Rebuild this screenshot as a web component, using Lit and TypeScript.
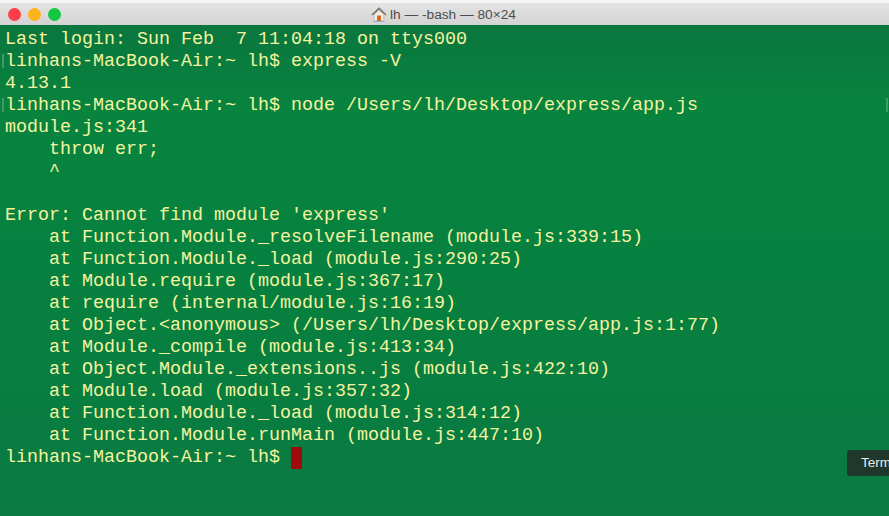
import { LitElement, html, css } from "lit";
import { customElement } from "lit/decorators.js";

const LINES = [
  "Last login: Sun Feb  7 11:04:18 on ttys000",
  "linhans-MacBook-Air:~ lh$ express -V",
  "4.13.1",
  "linhans-MacBook-Air:~ lh$ node /Users/lh/Desktop/express/app.js",
  "module.js:341",
  "    throw err;",
  "    ^",
  "",
  "Error: Cannot find module 'express'",
  "    at Function.Module._resolveFilename (module.js:339:15)",
  "    at Function.Module._load (module.js:290:25)",
  "    at Module.require (module.js:367:17)",
  "    at require (internal/module.js:16:19)",
  "    at Object.<anonymous> (/Users/lh/Desktop/express/app.js:1:77)",
  "    at Module._compile (module.js:413:34)",
  "    at Object.Module._extensions..js (module.js:422:10)",
  "    at Module.load (module.js:357:32)",
  "    at Function.Module._load (module.js:314:12)",
  "    at Function.Module.runMain (module.js:447:10)",
];

@customElement("app-root")
export class AppRoot extends LitElement {
  static styles = css`
    :host {
      display: block; width: 889px; height: 516px; overflow: hidden; position: relative;
      background: linear-gradient(#0a763e 25px, #08843f 110px, #07803f 300px, #0a7a42 516px);
    }
    .bar {
      height: 22px; border-top: 3px solid #f6f6f6; position: relative;
      background: linear-gradient(#e4e4e4, #d3d3d3);
      display: flex; align-items: center; justify-content: center;
      font: 13.7px "Liberation Sans", Arial, sans-serif; color: #4d4d4d;
    }
    .lights { position: absolute; left: 8px; top: 5px; display: flex; gap: 7px; }
    .light { width: 13px; height: 13px; border-radius: 50%; }
    .r { background: #fc3d48; } .y { background: #fdb31e; } .g { background: #12c741; }
    .title { display: flex; align-items: center; gap: 3px; margin-right: 2px; margin-top: 1px; }
    .title svg { width: 16px; height: 17px; }
    .term {
      padding: 4px 0 0 5px;
      font: 18.33px/22px "Liberation Mono", "Courier New", monospace;
      color: #f4f4a0; white-space: pre;
    }
    .line { height: 22px; }
    .cursor { display: inline-block; width: 11px; height: 22px; background: #a10a0a; vertical-align: top; }
    .tip {
      position: absolute; left: 847px; top: 450px; height: 26px; width: 42px;
      background: #20382c; border-radius: 3px 0 0 3px; color: #e8eee9;
      font: 13.5px/26px "Liberation Sans", Arial, sans-serif; padding-left: 14px; box-sizing: border-box;
      overflow: hidden; white-space: nowrap;
    }
    .mark { position: absolute; width: 2px; height: 14px; background: #3f9a68; }
    .m1 { left: 2px; top: 54px; } .m2 { left: 2px; top: 98px; } .m3 { left: 886px; top: 98px; }
  `;

  render() {
    return html`
      <div class="bar">
        <div class="lights"><span class="light r"></span><span class="light y"></span><span class="light g"></span></div>
        <div class="title">
          <svg viewBox="0 0 16 17">
            <path d="M1 9 8 2.5 15 9" fill="none" stroke="#77736e" stroke-width="1.7"/>
            <path d="M3.2 8.6 8 4.4l4.8 4.2V15H3.2z" fill="#f4efe6" stroke="#a8a49c" stroke-width=".6"/>
            <rect x="6" y="9.5" width="4" height="5.5" fill="#d9691f"/>
            <path d="M2.5 15.5h11" stroke="#8fb0d0" stroke-width="1"/>
          </svg>
          <span>lh — -bash — 80×24</span>
        </div>
      </div>
      <div class="term">${LINES.map((l) => html`<div class="line">${l}</div>`)}<div class="line">linhans-MacBook-Air:~ lh$ <span class="cursor"></span></div></div>
      <span class="mark m1"></span><span class="mark m2"></span><span class="mark m3"></span>
      <div class="tip">Term</div>
    `;
  }
}
